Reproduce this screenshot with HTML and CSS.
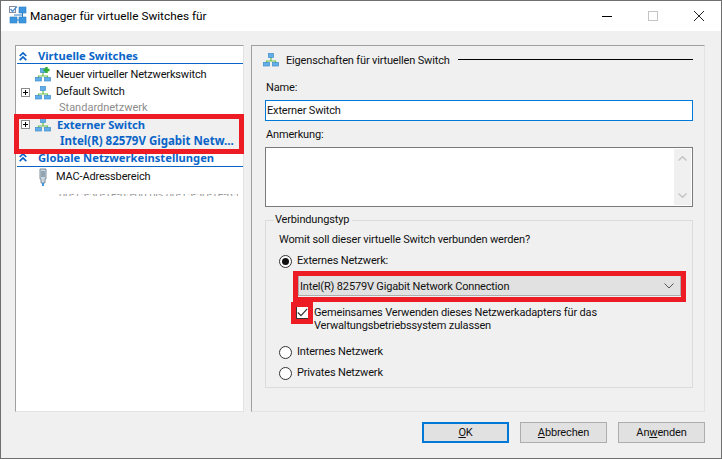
FILE: index.html
```html
<!DOCTYPE html>
<html lang="de">
<head>
<meta charset="utf-8">
<title>Manager für virtuelle Switches für</title>
<link rel="stylesheet" href="styles.css">
</head>
<body>
<svg class="defs" width="0" height="0" aria-hidden="true">
  <symbol id="net" viewBox="0 0 16 15">
    <path d="M8 5V9M3.5 11V9H12.5V11" fill="none" stroke="#6cc04a" stroke-width="1.2"/>
    <rect x="5.5" y="1.5" width="5" height="4" fill="#62aee8" stroke="#3d8ccb" stroke-width=".7"/>
    <rect x="0.5" y="10.5" width="6" height="3.5" fill="#62aee8" stroke="#3d8ccb" stroke-width=".7"/>
    <rect x="9.5" y="10.5" width="6" height="3.5" fill="#62aee8" stroke="#3d8ccb" stroke-width=".7"/>
  </symbol>
  <symbol id="chev2" viewBox="0 0 8 9">
    <path d="M.7 4 4 .9 7.3 4M.7 8.1 4 5 7.3 8.1" fill="none" stroke="#0a64c8" stroke-width="1.7"/>
  </symbol>
</svg>
<div class="window">
  <header class="titlebar">
    <svg class="appicon" viewBox="0 0 18 18" width="18" height="18">
      <rect x="0.5" y="0.5" width="6" height="6" fill="#fff" stroke="#8a8a9a"/>
      <path d="M1.5 3 3.5 5.5 8 .5" fill="none" stroke="#4c8fd0" stroke-width="1.3"/>
      <rect x="10" y="1" width="7" height="6" fill="#3d97e0" stroke="#2a7cc0" stroke-width=".6"/>
      <rect x="1" y="11" width="7" height="6" fill="#3d97e0" stroke="#2a7cc0" stroke-width=".6"/>
      <rect x="10" y="11" width="7" height="6" fill="#3d97e0" stroke="#2a7cc0" stroke-width=".6"/>
      <path d="M13.5 7V11M8 14H10M5 9H13.5" fill="none" stroke="#2a7cc0" stroke-width="1"/>
    </svg>
    <span class="title">Manager für virtuelle Switches für</span>
    <div class="winctl">
      <span class="ctl"><svg viewBox="0 0 10 10" width="10" height="10"><path d="M0 5.5H10" stroke="#000"/></svg></span>
      <span class="ctl"><svg viewBox="0 0 10 10" width="10" height="10"><rect x=".5" y=".5" width="9" height="9" fill="none" stroke="#c4c4c4"/></svg></span>
      <span class="ctl"><svg viewBox="0 0 10 10" width="10" height="10"><path d="M0 0 10 10M10 0 0 10" stroke="#222" stroke-width="1"/></svg></span>
    </div>
  </header>

  <main class="body">
    <nav class="tree">
      <div class="sect"><svg class="chev" width="8" height="9"><use href="#chev2"/></svg>Virtuelle Switches</div>
      <div class="row plain row-new"><span class="ico"><svg width="16" height="15" viewBox="0 0 16 15"><use href="#net"/><path d="M11.5 0V6M8.5 3H14.5" stroke="#2fae32" stroke-width="2.4"/></svg></span>Neuer virtueller Netzwerkswitch</div>
      <div class="row row-def"><span class="exp"></span><span class="ico"><svg width="16" height="15"><use href="#net"/></svg></span>Default Switch</div>
      <div class="sub">Standardnetzwerk</div>
      <div class="selected">
        <div class="row row-sel"><span class="exp"></span><span class="ico"><svg width="16" height="15"><use href="#net"/></svg></span><b class="off">Externer Switch</b></div>
        <div class="seldesc">Intel(R) 82579V Gigabit Netw...</div>
      </div>
      <div class="sect sect2"><svg class="chev" width="8" height="9"><use href="#chev2"/></svg>Globale Netzwerkeinstellungen</div>
      <div class="row plain row-mac"><span class="ico"><svg width="16" height="18" viewBox="0 0 16 18"><path d="M5 1H11V11H10V15H6V11H5Z" fill="#c9d6df" stroke="#7d8f9c"/><path d="M7 3V9M9 3V9" stroke="#5f7483"/><path d="M7 15H9V18H7Z" fill="#3d97e0"/></svg></span>MAC-Adressbereich</div>
      <div class="clip">00-15-5D-1F-65-00 bis 00-15-5D-1F-65-FF</div>
    </nav>

    <section class="props">
      <div class="propshead">
        <span class="ico"><svg width="16" height="15"><use href="#net"/></svg></span>
        <span class="headtext">Eigenschaften für virtuellen Switch</span>
        <span class="rule"></span>
      </div>
      <div class="lbl lbl-name">Name:</div>
      <div class="input">Externer Switch</div>
      <div class="lbl lbl-note">Anmerkung:</div>
      <div class="note">
        <div class="scroll">
          <svg viewBox="0 0 9 5" width="9" height="5"><path d="M.5 4.5 4.5 .7 8.5 4.5" fill="none" stroke="#c4c4c4" stroke-width="1.4"/></svg>
          <svg viewBox="0 0 9 5" width="9" height="5"><path d="M.5 .5 4.5 4.3 8.5 .5" fill="none" stroke="#c4c4c4" stroke-width="1.4"/></svg>
        </div>
      </div>
      <fieldset class="group">
        <legend>Verbindungstyp</legend>
        <div class="question">Womit soll dieser virtuelle Switch verbunden werden?</div>
        <div class="radio radio-ext"><span class="dot on"></span>Externes Netzwerk:</div>
        <div class="select">
          <span class="seltext">Intel(R) 82579V Gigabit Network Connection</span>
          <svg viewBox="0 0 10 6" width="10" height="6"><path d="M.5 .5 5 5 9.5 .5" fill="none" stroke="#555" stroke-width="1"/></svg>
        </div>
        <div class="check">
          <span class="box"><svg viewBox="0 0 11 9" width="11" height="9"><path d="M.8 4.5 4 7.6 10.2 .8" fill="none" stroke="#333" stroke-width="1.2"/></svg></span>
          <span>Gemeinsames Verwenden dieses Netzwerkadapters für das<br>Verwaltungsbetriebssystem zulassen</span>
        </div>
        <div class="radio radio-int"><span class="dot"></span>Internes Netzwerk</div>
        <div class="radio radio-priv"><span class="dot"></span>Privates Netzwerk</div>
      </fieldset>
    </section>
  </main>

  <footer class="footer">
    <button class="btn primary"><u>O</u>K</button>
    <button class="btn"><u>A</u>bbrechen</button>
    <button class="btn">An<u>w</u>enden</button>
  </footer>

  <div class="mark mark-tree"></div>
  <div class="mark mark-select"></div>
  <div class="mark mark-check"></div>
</div>
</body>
</html>
```
FILE: styles.css
```css
* { box-sizing: border-box; }
html, body { margin: 0; padding: 0; }
body {
  width: 722px;
  height: 459px;
  overflow: hidden;
  font-family: Roboto, "Noto Sans", sans-serif;
  font-size: 11px;
  letter-spacing: -0.16px;
  color: #111;
}
.defs { position: absolute; }
.window {
  position: relative;
  width: 722px;
  height: 459px;
  background: #f0f0f0;
  border: 1px solid #6f6f6f;
  display: flex;
  flex-direction: column;
}
.titlebar {
  height: 30px;
  background: #fff;
  display: flex;
  align-items: center;
  padding-left: 8px;
  flex: none;
}
.appicon { margin-right: 3px; margin-top: -2px; }
.title { font-size: 11.8px; letter-spacing: 0; color: #000; }
.winctl { margin-left: auto; display: flex; margin-right: -1px; margin-top: -1px; }
.ctl { width: 46px; height: 20px; display: flex; align-items: center; justify-content: center; }

.body {
  display: flex;
  gap: 7px;
  padding: 14px 16px 0 14px;
  height: 381px;
  flex: none;
}
.tree {
  width: 229px;
  height: 367px;
  background: #fff;
  border: 1px solid #a0a0a0;
  border-right-color: #e3e3e3;
  border-bottom-color: #e3e3e3;
  padding: 3px 0 0 1px;
  overflow: hidden;
}
.sect {
  height: 15px;
  border-bottom: 1px solid #0a64c8;
  color: #0a64c8;
  font-family: "Noto Sans", sans-serif;
  font-weight: 700;
  font-size: 11.2px;
  letter-spacing: 0;
  line-height: 14px;
  padding-left: 2px;
  display: flex;
  align-items: center;
}
.sect2 { height: 16px; padding-bottom: 2px; }
.chev { margin-right: 11px; flex: none; }
.row {
  display: flex;
  align-items: center;
  padding-left: 4px;
  line-height: 16px;
  white-space: nowrap;
}
.row.plain { padding-left: 18px; }
.row-new { height: 20px; padding-top: 1px; }
.row-mac { height: 19px; }
.row-def { height: 16px; }
.exp {
  width: 9px;
  height: 9px;
  border: 1px solid #8c8c8c;
  margin-right: 5px;
  flex: none;
  background:
    linear-gradient(#000, #000) center / 5px 1px no-repeat,
    linear-gradient(#000, #000) center / 1px 5px no-repeat,
    #fff;
}
.ico { width: 16px; margin-right: 5px; display: flex; align-items: center; flex: none; }
.sub {
  height: 15px;
  line-height: 15px;
  padding-left: 42px;
  color: #8c8c8c;
  letter-spacing: 0;
}
.selected {
  height: 36px;
  background: #f0f0f0;
  padding-top: 2px;
}
.row-sel { height: 15px; color: #0a64c8; }
.off { font-family: "Noto Sans", sans-serif; font-weight: 700; font-size: 11.2px; letter-spacing: 0; margin-left: 1px; }
.seldesc {
  color: #0a64c8;
  font-family: "Noto Sans", sans-serif;
  font-weight: 700;
  font-size: 11.5px;
  letter-spacing: 0;
  padding-left: 43px;
  margin-top: 1px;
  line-height: 15px;
  white-space: nowrap;
}
.clip {
  height: 2px;
  line-height: 2px;
  margin-top: 8px;
  margin-right: 5px;
  overflow: hidden;
  padding-left: 42px;
  white-space: nowrap;
  color: #9a9a9a;
}

.props {
  width: 454px;
  height: 367px;
  border: 1px solid #a0a0a0;
  border-right-color: #e3e3e3;
  border-bottom-color: #e3e3e3;
  padding: 6px 11px 0 13px;
  display: flex;
  flex-direction: column;
}
.propshead {
  display: flex;
  align-items: center;
  height: 15px;
  margin-left: -2px;
  white-space: nowrap;
}
.propshead .ico { margin-right: 7px; width: 16px; }
.headtext { padding-top: 1px; }
.rule { flex: 1; height: 1px; background: #000; margin-left: 8px; }
.lbl { line-height: 14px; margin-left: 1px; }
.lbl-name { margin-top: 14px; }
.input {
  margin-top: 5px;
  height: 21px;
  border: 1px solid #0078d7;
  background: #fff;
  line-height: 20px;
  padding-left: 1px;
  flex: none;
}
.lbl-note { margin-top: 7px; }
.note {
  margin-top: 5px;
  height: 60px;
  flex: none;
  border: 1px solid #7a7a7a;
  background: #fff;
  display: flex;
  justify-content: flex-end;
  padding: 1px 1px 1px 0;
}
.scroll {
  width: 17px;
  background: #f0f0f0;
  display: flex;
  flex-direction: column;
  justify-content: space-between;
  align-items: center;
  padding: 7px 0 7px;
}
.group {
  margin: 6px 0 0;
  padding: 0 0 0 13px;
  height: 175px;
  flex: none;
  border: 1px solid #dcdcdc;
  position: relative;
}
.group legend {
  padding: 0 3px 0 1px;
  margin-left: -5px;
  line-height: 14px;
  height: 14px;
}
.question { margin-top: 6px; line-height: 14px; }
.radio { display: flex; align-items: center; line-height: 14px; }
.radio-ext { margin-top: 7px; }
.radio-int { margin-top: 13px; }
.radio-priv { margin-top: 7px; }
.dot {
  width: 13px;
  height: 13px;
  border-radius: 50%;
  border: 1px solid #333;
  background: #fff;
  margin-right: 5px;
  flex: none;
  position: relative;
}
.dot.on::after {
  content: "";
  position: absolute;
  left: 2px;
  top: 2px;
  width: 7px;
  height: 7px;
  border-radius: 50%;
  background: #111;
}
.select {
  margin: 7px 11px 0 19px;
  height: 21px;
  background: #e1e1e1;
  border: 1px solid #adadad;
  display: flex;
  align-items: center;
  justify-content: space-between;
  padding: 0 6px 0 1px;
}
.seltext { padding-top: 1px; }
.check { display: flex; margin: 10px 0 0 17px; line-height: 13px; }
.box {
  width: 13px;
  height: 13px;
  background: #fff;
  border: 1px solid #333;
  margin: 0 5px 0 0;
  flex: none;
  display: flex;
  align-items: center;
  justify-content: center;
}
.footer {
  display: flex;
  justify-content: flex-end;
  gap: 11px;
  padding-right: 16px;
  margin-top: 10px;
}
.btn {
  width: 87px;
  height: 21px;
  background: #e1e1e1;
  border: 1px solid #adadad;
  font: inherit;
  letter-spacing: inherit;
  color: #111;
  padding: 0;
  line-height: 18px;
}
.btn.primary { border: 2px solid #0078d7; }

.mark { position: absolute; border: 5px solid #ed1c24; }
.mark-tree { left: 13px; top: 113px; width: 230px; height: 40px; }
.mark-select { left: 292px; top: 270px; width: 393px; height: 31px; }
.mark-check { left: 290px; top: 301px; width: 22px; height: 22px; }
```
